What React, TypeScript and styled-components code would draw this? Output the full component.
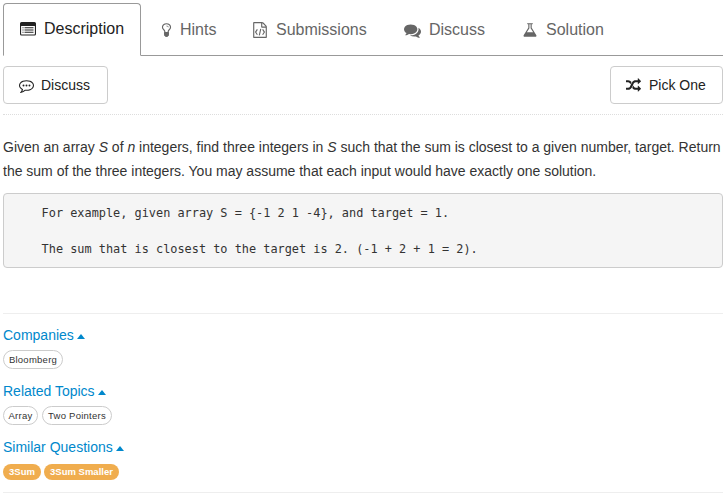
import React from "react";
import styled, { createGlobalStyle } from "styled-components";

const GlobalStyle = createGlobalStyle`
  * { box-sizing: border-box; }
  body {
    margin: 0;
    background: #fff;
    color: #333;
    font: 14px/24px "Liberation Sans", Arial, sans-serif;
    overflow: hidden;
  }
`;

const Page = styled.main`
  width: 728px;
  height: 498px;
  padding: 3px 5px 0 3px;
`;

const Tabs = styled.nav`
  display: flex;
  height: 53px;
  font-size: 16px;
`;

const Tab = styled.div<{ $width: number; $active?: boolean }>`
  display: flex;
  align-items: center;
  flex: none;
  width: ${(p) => p.$width}px;
  padding: ${(p) => (p.$active ? "0 0 2px 16px" : "2px 0 0 20px")};
  border: 1px solid ${(p) => (p.$active ? "#999" : "transparent")};
  border-bottom-color: ${(p) => (p.$active ? "transparent" : "#999")};
  border-radius: ${(p) => (p.$active ? "4px 4px 0 0" : "0")};
  color: ${(p) => (p.$active ? "#222" : "#666")};
  ${(p) => !p.$active && "border-width: 0 0 1px;"}
`;

const TabFill = styled.div`
  flex: 1;
  border-bottom: 1px solid #999;
`;

const IconSlot = styled.span<{ $gap: number }>`
  display: flex;
  margin-right: ${(p) => p.$gap}px;
`;

const Svg = styled.svg`
  display: block;
  fill: currentColor;
`;

const Actions = styled.div`
  display: flex;
  justify-content: space-between;
  height: 59px;
  padding-top: 10px;
  border-bottom: 1px dotted #ddd;
`;

const Button = styled.button<{ $width: number }>`
  display: flex;
  align-items: center;
  width: ${(p) => p.$width}px;
  height: 38px;
  padding: 0 0 0 15px;
  border: 1px solid #ccc;
  border-radius: 4px;
  background: #fff;
  color: #222;
  font: 14px "Liberation Sans", Arial, sans-serif;
`;

const Statement = styled.p`
  margin: 20px 0 10px;
  white-space: nowrap;
`;

const Line = styled.span`
  display: block;
  letter-spacing: -0.006px;
`;

const Example = styled.pre`
  height: 75px;
  margin: 0 0 45px;
  padding: 10px 9px;
  border: 1px solid #ccc;
  border-radius: 4px;
  background: #f5f5f5;
  font: 11.88px/18px "DejaVu Sans Mono", monospace;
`;

const Details = styled.section`
  height: 180px;
  padding-top: 9px;
  border-top: 1px solid #eee;
  border-bottom: 1px solid #eee;
`;

const Group = styled.div`
  height: 56px;
`;

const GroupTitle = styled.a`
  display: flex;
  align-items: center;
  gap: 3px;
  height: 24px;
  color: #0088cc;
`;

const Caret = styled.span`
  border: 4.5px solid transparent;
  border-top: 0;
  border-bottom: 5px solid currentColor;
  margin-top: 2px;
`;

const Tags = styled.div<{ $gap?: number }>`
  display: flex;
  gap: ${(p) => p.$gap ?? 4}px;
  padding-top: 3px;
`;

const Tag = styled.span<{ $width: number; $filled?: boolean }>`
  display: flex;
  align-items: center;
  justify-content: center;
  width: ${(p) => p.$width}px;
  height: ${(p) => (p.$filled ? 16 : 19)}px;
  margin-top: ${(p) => (p.$filled ? 2 : 0)}px;
  border: ${(p) => (p.$filled ? "0" : "1px solid #ccc")};
  border-radius: 10px;
  background: ${(p) => (p.$filled ? "#f0ad4e" : "#fff")};
  color: ${(p) => (p.$filled ? "#fff" : "#333")};
  font-size: 9.5px;
  font-weight: ${(p) => (p.$filled ? 700 : 400)};
  letter-spacing: ${(p) => (p.$filled ? 0 : 0.25)}px;
  line-height: 1;
  white-space: nowrap;
`;

const paths = {
  bulb: "M1120 576q0 13-9.500 22.500t-22.500 9.500-22.500-9.500-9.500-22.500q0-46-54-71t-106-25q-13 0-22.500-9.500t-9.500-22.500 9.500-22.500 22.500-9.500q50 0 99.500 16t87 54 37.500 90zm160 0q0-72-34.500-134t-90-101.500-123-62-136.500-22.500-136.500 22.500-123 62-90 101.500-34.500 134q0 101 68 180 10 11 30.500 33t30.500 33q128 153 141 298h228q13-145 141-298 10-11 30.500-33t30.500-33q68-79 68-180zm128 0q0 155-103 268-45 49-74.500 87t-59.500 95.500-34 107.500q47 28 47 82 0 37-25 64 25 27 25 64 0 52-45 81 13 23 13 47 0 46-31.500 71t-77.500 25q-20 44-60 70t-87 26-87-26-60-70q-46 0-77.500-25t-31.500-71q0-24 13-47-45-29-45-81 0-37 25-64-25-27-25-64 0-54 47-82-4-50-34-107.500t-59.500-95.500-74.500-87q-103-113-103-268 0-99 44.500-184.500t117-142 164-89 186.500-32.500 186.500 32.500 164 89 117 142 44.500 184.500z",
  file: "M1596 380q28 28 48 76t20 88v1152q0 40-28 68t-68 28h-1344q-40 0-68-28t-28-68v-1600q0-40 28-68t68-28h896q40 0 88 20t76 48zm-444-244v376h376q-10-29-22-41l-313-313q-12-12-41-22zm384 1528v-1024h-416q-40 0-68-28t-28-68v-416h-768v1536h1280z",
  comments: "M1408 768q0 139-94 257t-256.500 186.500-353.500 68.500q-86 0-176-16-124 88-278 128-36 9-86 16h-3q-11 0-20.500-8t-11.500-21q-1-3-1-6.500t.5-6.500 2-6l2.500-5 3.500-5.500 4-5 4.500-5 4-4.500q5-6 23-25t26-29.500 22.500-29 25-38.500 20.500-44q-124-72-195-177t-71-224q0-139 94-257t256.500-186.500 353.500-68.500 353.500 68.500 256.500 186.500 94 257zm384 256q0 120-71 224.500t-195 176.500q10 24 20.500 44t25 38.500 22.500 29 26 29.500 23 25q1 1 4 4.500t4.500 5 4 5 3.500 5.500l2.500 5 2 6 .5 6.500-1 6.500q-3 14-13 22t-22 7q-50-7-86-16-154-40-278-128-90 16-176 16-271 0-472-132 58 4 88 4 161 0 309-45t264-129q125-92 192-212t67-254q0-77-23-152 129 71 204 178t75 230z",
  flask: "M1591 1448q56 89 21.500 152.500t-140.500 63.500h-1152q-106 0-140.500-63.500t21.500-152.500l503-793v-399h-64q-26 0-45-19t-19-45 19-45 45-19h512q26 0 45 19t19 45-19 45-45 19h-64v399zm-779-725l-272 429h712l-272-429-20-31v-436h-128v436z",
  random: "M666 481q-60 92-137 273-22-45-37-72.500t-40.500-63.500-51-56.500-63-35-81.500-14.500h-224q-14 0-23-9t-9-23v-192q0-14 9-23t23-9h224q250 0 410 225zm1126 799q0 14-9 23l-320 320q-9 9-23 9-13 0-22.500-9.500t-9.500-22.500v-192q-32 0-85 .5t-81 1-73-1-71-5-64-10.500-63-18.500-58-28.500-59-40-55-53.500-56-69.500q59-93 136-273 22 45 37 72.500t40.500 63.500 51 56.500 63 35 81.500 14.500h256v-192q0-14 9-23t23-9q12 0 24 10l319 319q9 9 9 23zm0-896q0 14-9 23l-320 320q-9 9-23 9-13 0-22.500-9.500t-9.500-22.500v-192h-256q-48 0-87 15t-69 45-51 61.500-45 77.500q-32 62-78 171-29 66-49.500 111t-54 105-64 100-74 83-90 68.500-106.500 42-128 16.500h-224q-14 0-23-9t-9-23v-192q0-14 9-23t23-9h224q48 0 87-15t69-45 51-61.500 45-77.500q32-62 78-171 29-66 49.500-111t54-105 64-100 74-83 90-68.500 106.500-42 128-16.500h256v-192q0-14 9-23t23-9q12 0 24 10l319 319q9 9 9 23z",
  bubble: "M896 384q-204 0-381.500 69.500t-282 187.500-104.500 255q0 112 71.500 213.500t201.500 175.500l87 50-27 96q-24 91-70 172 152-63 275-171l43-38 57 6q69 8 130 8 204 0 381.500-69.500t282-187.500 104.500-255-104.500-255-282-187.500-381.500-69.500zm896 512q0 174-120 321.500t-326 233-450 85.500q-70 0-145-8-198 175-460 242-49 14-114 22h-5q-15 0-27-10.500t-16-27.500v-1q-3-4-.5-12t2-10 4.500-9.500l6-9 7-8.500 8-9q7-8 31-34.500t34.500-38 31-39.500 32.500-51 27-59 26-76q-157-89-247.500-220t-90.500-281q0-174 120-321.500t326-233 450-85.500 450 85.500 326 233 120 321.500z",
};

type IconProps = { d: string; size: number; gap: number; box?: string; width?: number; children?: React.ReactNode };

const Icon = ({ d, size, gap, width, box = "0 0 1792 1792", children }: IconProps) => (
  <IconSlot $gap={gap}>
    <Svg width={width ?? size} height={size} viewBox={box}>
      <path d={d} />
      {children}
    </Svg>
  </IconSlot>
);

const ListIcon = () => (
  <IconSlot $gap={8}>
    <Svg width="16" height="14" viewBox="0 0 16 14">
      <path fillRule="evenodd" d="M1.500 0h13a1.500 1.500 0 0 1 1.500 1.500v10.500a1.500 1.500 0 0 1-1.500 1.500h-13a1.500 1.500 0 0 1-1.500-1.500v-10.500a1.500 1.500 0 0 1 1.500-1.500zM1.100 4v8q0 .4.4.4h13q.4 0 .4-.4V4z" />
      <path d="M2.500 5.200h1v1h-1zM4.500 5.200h9v1h-9zM2.500 7.500h1v1h-1zM4.500 7.500h9v1h-9zM2.500 9.800h1v1h-1zM4.500 9.800h9v1h-9z" />
    </Svg>
  </IconSlot>
);

export default function App() {
  return (
    <>
      <GlobalStyle />
      <Page>
        <Tabs>
          <Tab $width={138} $active><ListIcon />Description</Tab>
          <Tab $width={92}>
            <Icon d={paths.bulb} size={16} width={11} box="280 0 1232 1792" gap={8}>
              <path d="M680 1120h432v430l-120 110h-192l-120-110z" />
            </Icon>
            Hints
          </Tab>
          <Tab $width={151}>
            <Icon d={paths.file} size={16} width={14} box="112 0 1568 1792" gap={9}>
              <path d="M600 830L400 1130l200 300M1190 830l200 300-200 300M980 760L820 1500" fill="none" stroke="currentColor" strokeWidth="125" />
            </Icon>
            Submissions
          </Tab>
          <Tab $width={118}><Icon d={paths.comments} size={17} gap={8} />Discuss</Tab>
          <Tab $width={124}><Icon d={paths.flask} size={16} gap={8} />Solution</Tab>
          <TabFill />
        </Tabs>
        <Actions>
          <Button $width={105}>
            <Icon d={paths.bubble} size={15} gap={7}>
              <circle cx="540" cy="896" r="115" /><circle cx="896" cy="896" r="115" /><circle cx="1252" cy="896" r="115" />
            </Icon>
            Discuss
          </Button>
          <Button $width={113}><Icon d={paths.random} size={15} gap={8} />Pick One</Button>
        </Actions>
        <Statement>
          <Line>Given an array <em>S</em> of <em>n</em> integers, find three integers in <em>S</em> such that the sum is closest to a given number, target. Return</Line>
          <Line>the sum of the three integers. You may assume that each input would have exactly one solution.</Line>
        </Statement>
        <Example>{"    For example, given array S = {-1 2 1 -4}, and target = 1.\n\n    The sum that is closest to the target is 2. (-1 + 2 + 1 = 2)."}</Example>
        <Details>
          <Group>
            <GroupTitle>Companies<Caret /></GroupTitle>
            <Tags><Tag $width={60}>Bloomberg</Tag></Tags>
          </Group>
          <Group>
            <GroupTitle>Related Topics<Caret /></GroupTitle>
            <Tags><Tag $width={35}>Array</Tag><Tag $width={70}>Two Pointers</Tag></Tags>
          </Group>
          <Group>
            <GroupTitle>Similar Questions<Caret /></GroupTitle>
            <Tags $gap={3}><Tag $width={38} $filled>3Sum</Tag><Tag $width={75} $filled>3Sum Smaller</Tag></Tags>
          </Group>
        </Details>
      </Page>
    </>
  );
}
